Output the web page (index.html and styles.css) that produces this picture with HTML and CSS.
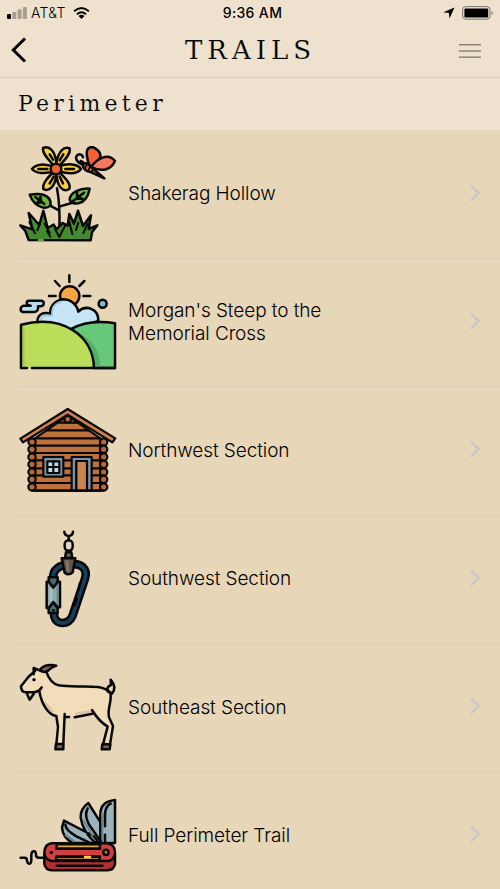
FILE: index.html
```html
<!DOCTYPE html>
<html lang="en">
<head>
<meta charset="utf-8">
<title>Trails</title>
<link rel="stylesheet" href="styles.css">
</head>
<body>
<header class="top">
  <div class="status">
    <div class="status-left">
      <svg class="signal" viewBox="0 0 20 13"><rect x="0" y="8" width="4" height="5" rx="1"/><g opacity=".3"><rect x="5.3" y="6" width="4" height="7" rx="1"/><rect x="10.6" y="3.3" width="4" height="9.7" rx="1"/><rect x="15.9" y="1" width="4" height="12" rx="1"/></g></svg>
      <span class="carrier">AT&amp;T</span>
      <svg class="wifi" viewBox="0 0 18 13"><g fill="none" stroke="#000" stroke-width="2.1"><path d="M1 4.7Q9-2.5 17 4.7M4 8Q9 3.6 14 8"/></g><path d="M5.8 9.7Q9 7 12.2 9.7L9 12.9Z"/></svg>
    </div>
    <div class="clock">9:36 AM</div>
    <div class="status-right">
      <svg class="locate" viewBox="0 0 12 12"><path d="M11.5.4L6.5 11.5L5.9 6L.4 5.3Z"/></svg>
      <svg class="battery" viewBox="0 0 32 14"><rect x=".6" y=".6" width="27.4" height="12.6" rx="3.2" fill="none" stroke="#777167" stroke-width="1"/><rect x="2.4" y="2.4" width="23.8" height="9" rx="1"/><path d="M29.6 4.7Q32.5 7 29.6 9.3Z" fill="#8c857a"/></svg>
    </div>
  </div>
  <nav class="bar">
    <svg class="back" viewBox="0 0 16 26"><path d="M14 1.5L2.3 13L14 24.5"/></svg>
    <h1>TRAILS</h1>
    <svg class="menu" viewBox="0 0 22 14"><path d="M0 .8H22M0 7H22M0 13.1H22"/></svg>
  </nav>
</header>
<h2>Perimeter</h2>
<ul class="list">
  <li class="row">
    <svg class="pic" viewBox="0 0 348 336">
      <path class="stem" d="M141 151Q151 205 148 275M148 218L119 202M150 205L185 195"/>
      <path fill="#69b83d" d="M59 170C88 165 123 168 122 200C115 216 76 214 59 170ZM239 152C211 150 180 163 179 185C184 203 229 206 239 152Z"/>
      <path d="M76 177L103 198M91 176L94 193L77 196M222 164L190 188M201 165V182L218 182"/>
      <g fill="#f8cf42"><path d="M139 92C121 69 96 49 99 30C119 21 137 41 139 77C144 41 162 23 179 31C183 49 161 70 145 86C174 75 202 77 213 93C202 108 174 108 145 99C164 119 184 136 178 153C159 165 142 145 139 110C136 145 117 163 100 153C96 136 115 117 133 99C107 108 79 108 66 93C77 77 105 76 135 88"/></g>
      <path d="M119 49L129 65M160 49L149 67M85 93H112M166 93H192M119 136L131 116M159 136L149 116"/>
      <circle cx="138" cy="93" r="16" fill="#f2602d"/>
      <path fill="#f46239" d="M237 80C226 45 227 24 250 28C269 37 276 51 268 65L242 86Z"/>
      <path fill="#fa785e" d="M244 87C260 62 294 43 315 69C304 94 278 104 244 87Z"/>
      <path fill="none" d="M222 78C220 72 217 70 212 69M221 80C200 76 189 54 208 49Q218 50 219 58"/>
      <path fill="#b87831" d="M218 82C223 70 235 78 244 87L283 121L244 103Q221 99 218 82Z"/><path d="M230 80L224 93M240 86L235 98M249 94L245 102" stroke-width="5"/>
      <path fill="#438b2e" d="M56 306L46 279L31 262L67 274L56 225L88 261L100 218L113 270L131 260L139 274L158 255L173 263L178 228L192 257L204 218L219 264L243 232L236 273L262 262L246 283L242 307Z"/>
      <path fill="none" stroke-width="6" d="M58 252L75 286M91 254L82 277M104 257L119 285M135 273L148 297L165 263M178 252L187 288M205 254L198 276M233 257L220 285M111 280L121 296"/>
      <path stroke="#69a84b" d="M87 307H98"/>
    </svg><span>Shakerag Hollow</span><svg class="chevron" viewBox="0 0 10 18"><path d="M1 1.5L8.6 9L1 16.5"/></svg>
  </li>
  <li class="row">
    <svg class="pic" viewBox="0 0 348 336">
      <path d="M178 28V48M135 45L149 60M223 45L208 60M117 90H137M220 90H241"/>
      <circle cx="179" cy="90" r="29" fill="#faa544"/>
      <path fill="#c7e5f4" d="M82 169C82 145 99 137 121 143C119 118 139 103 158 100C185 100 201 117 205 137C227 115 266 127 265 165L181 191Z"/>
      <path fill="none" stroke="#9bc9dc" stroke-width="5" d="M92 163Q92 148 118 149L127 149Q122 115 153 107"/>
      <path fill="#b6dced" d="M55 104H94Q102 105 101 114Q99 122 89 121H84Q86 137 73 138H38Q31 136 32 128Q34 120 41 119H62L52 116Q47 106 55 104Z"/>
      <circle cx="278" cy="113" r="12" fill="#80b7d2"/>
      <path fill="#66c878" d="M181 190Q237 159 315 172V306H252Z"/>
      <path fill="#53ae67" stroke="none" d="M187 191Q274 228 270 303H251Q246 237 187 191Z"/>
      <path fill="#bcdd59" stroke="none" d="M33 306V176C161 143 250 211 252 306Z"/>
      <path fill="none" d="M51 306H33V176C161 143 250 211 252 306M66 306H315"/>
      <path fill="none" stroke="#a1c451" stroke-width="5" d="M41 299V182"/>
    </svg><span>Morgan's Steep to the<br>Memorial Cross</span><svg class="chevron" viewBox="0 0 10 18"><path d="M1 1.5L8.6 9L1 16.5"/></svg>
  </li>
  <li class="row">
    <svg class="pic cabin" viewBox="0 -4 348 336">
      <path fill="#bd713b" d="M75 129L173 61L271 129V286H75Z"/>
      <path fill="none" d="M137 82H210M111 105H235M76 129H270M76 151H270M76 173H270M76 195H270M76 219H270M76 240H270M76 263H270"/>
      <circle cx="173" cy="72" r="10" fill="#b66938"/>
      <g fill="#b4673a"><circle cx="66" cy="140" r="11"/><circle cx="66" cy="162" r="11"/><circle cx="66" cy="185" r="11"/><circle cx="66" cy="207" r="11"/><circle cx="66" cy="230" r="11"/><circle cx="66" cy="252" r="11"/><circle cx="66" cy="275" r="11"/><circle cx="281" cy="140" r="11"/><circle cx="281" cy="162" r="11"/><circle cx="281" cy="185" r="11"/><circle cx="281" cy="207" r="11"/><circle cx="281" cy="230" r="11"/><circle cx="281" cy="252" r="11"/><circle cx="281" cy="275" r="11"/></g>
      <path fill="#ce7f4b" d="M173 41L316 129L307 141L173 58L39 141L31 130Z"/>
      <path fill="#7d91a7" d="M100 185H160V244H100ZM185 185H245V286H231V198H199V286H185Z"/>
      <path fill="#c8854e" d="M199 197H231V286H199Z"/><path fill="#b8dce3" d="M112 198H148V233H112Z"/><path d="M130 198V233M112 215H148M66 286H281"/>
    </svg><span>Northwest Section</span><svg class="chevron" viewBox="0 0 10 18"><path d="M1 1.5L8.6 9L1 16.5"/></svg>
  </li>
  <li class="row">
    <svg class="pic" viewBox="0 2 348 336">
      <path fill="none" d="M163 28C164 45 188 45 189 28M176 42V54"/><rect x="164" y="54" width="24" height="31" rx="12" fill="none"/><path fill="#686663" d="M168 90H184L187 107H165Z"/>
      <path fill="none" stroke-width="26" d="M130 169C126 140 151 128 177 127C213 120 234 139 225 169L187 282C175 309 139 308 133 283L129 257"/>
      <path fill="none" stroke="#163f5d" stroke-width="11" d="M130 169C126 140 151 128 177 127C213 120 234 139 225 169L187 282C175 309 139 308 133 283L129 257"/>
      <path d="M206 202L210 183M193 250L201 229"/>
      <path fill="#62564f" d="M155 108H196L188 150Q176 161 164 151Z"/><path stroke="#84776d" d="M171 116L174 145"/>
      <path fill="#426b74" d="M116 165H143V183L130 194L116 183ZM116 258L130 240L143 258V272H116Z"/>
      <path fill="#8fabaf" d="M110 178H116L130 196L144 178H150V255H143L130 239L116 257H110Z"/><path stroke="#a9c4c7" d="M123 200V233"/><path stroke="#65868c" stroke-width="6" d="M143 190V244"/><path d="M130 264H131"/>
    </svg><span>Southwest Section</span><svg class="chevron" viewBox="0 0 10 18"><path d="M1 1.5L8.6 9L1 16.5"/></svg>
  </li>
  <li class="row">
    <svg class="pic" viewBox="0 -12 348 336">
      <path fill="#f1ddba" stroke="none" d="M71 48L102 47Q117 79 137 89L273 97L303 118L294 159L309 211L299 272H279L292 215Q266 197 246 166L164 187L159 270H139L141 185Q104 164 88 110L44 112L33 96Z"/>
      <path stroke="#dac19c" stroke-width="7" d="M94 106L84 114M199 176L239 169M106 145L127 169" fill="none"/>
      <path fill="#786060" d="M89 45Q105 25 139 32Q123 37 111 50Q99 54 89 45Z"/><path fill="#796461" d="M138 267H160V283H136ZM277 268H301L299 283H275Z"/>
      <path fill="#eed1ac" d="M302 74Q322 98 306 116L293 109Q289 95 303 90Z"/>
      <path fill="none" d="M71 58V39L91 47M75 48L55 66L33 94Q33 112 48 112L74 111Q88 109 95 97M49 112L59 134L73 114M108 49Q122 86 146 91C204 101 274 82 301 113C307 141 291 158 297 187L309 213L300 268M88 108C95 151 117 180 139 183L144 216L139 268M164 177L160 267M166 186H177M194 187L247 176M246 165Q266 198 293 215L279 268"/><circle cx="72" cy="74" r="5" stroke="none"/>
    </svg><span>Southeast Section</span><svg class="chevron" viewBox="0 0 10 18"><path d="M1 1.5L8.6 9L1 16.5"/></svg>
  </li>
  <li class="row">
    <svg class="pic" viewBox="0 -32 348 336">
      <path fill="none" d="M32 204H44Q51 204 51 213Q52 222 58 222Q64 222 64 209V195Q65 185 72 185Q78 185 78 196Q78 204 87 204H103"/>
      <path fill="#9db3bc" d="M162 93L156 113Q157 142 188 160H267L251 139ZM235 40Q210 58 212 84Q218 125 254 158H272V99ZM315 31Q270 36 271 75V160H315Z"/>
      <path stroke="#698891" stroke-width="6" fill="none" d="M167 137L195 156M220 92L248 137M277 71V150"/>
      <path fill="none" d="M166 105Q167 122 199 140L237 158M233 56Q222 76 237 104L267 148M302 42Q285 50 285 76V110M285 135V155"/>
      <path fill="#b42d31" d="M103 194H315V223Q312 241 292 242H125Q107 241 103 223Z"/><path fill="#e3a93b" d="M137 164H270V211H137Z"/>
      <path fill="#d23f40" d="M125 161H140V177H270V161H290Q315 164 315 188Q314 211 295 214H269V201H139V214H124Q103 209 103 187Q105 163 125 161Z"/>
      <path d="M140 161H270M140 177H270M140 201H270M140 214H270M140 228H277"/><path stroke="#ffce4d" d="M225 202H240"/>
      <circle cx="124" cy="188" r="5" stroke="none"/><circle cx="288" cy="188" r="8" fill="#bd8a32"/>
    </svg><span>Full Perimeter Trail</span><svg class="chevron" viewBox="0 0 10 18"><path d="M1 1.5L8.6 9L1 16.5"/></svg>
  </li>
</ul>
</body>
</html>
```

FILE: styles.css
```css
* { box-sizing: border-box; }
body { margin: 0; width: 500px; height: 889px; overflow: hidden; background: #e7d6b8; color: #000; font-family: Inter, "Liberation Sans", sans-serif; }
svg { display: block; flex: none; }
.top { height: 78px; background: #eee2cf; border-bottom: 1px solid #d8cec1; }
.status { height: 25px; display: grid; grid-template-columns: 1fr auto 1fr; align-items: center; padding: 0 6px 0 11px; }
.status-left, .status-right { display: flex; align-items: center; }
.status-left { margin-left: -4px; }
.status-right { justify-content: flex-end; gap: 7px; }
.signal { width: 20px; height: 13px; margin-right: 4px; }
.carrier { font-size: 14px; font-weight: 300; letter-spacing: .3px; line-height: 24px; margin-right: 7px; }
.wifi { width: 17px; height: 12px; }
.clock { font-size: 14px; font-weight: 500; letter-spacing: .35px; line-height: 24px; }
.locate { width: 12px; height: 12px; }
.battery { width: 32px; height: 14px; }
.bar { height: 50px; display: flex; align-items: center; justify-content: space-between; padding: 0 19px 0 11px; }
.back { width: 16px; height: 26px; }
.back path { fill: none; stroke: #000; stroke-width: 3; stroke-linecap: butt; }
.menu { width: 22px; height: 14px; margin-top: 2px; }
.menu path { stroke: #5a554e; stroke-width: 1; }
h1, h2 { margin: 0; font-family: "DejaVu Serif", serif; font-weight: 400; -webkit-text-stroke: .15px #eee2cf; }
h1 { padding-left: 15px; font-size: 26px; line-height: 50px; letter-spacing: 5px; }
h2 { height: 51.67px; padding-left: 18px; background: #eee2cf; font-size: 22px; line-height: 51px; letter-spacing: 4.25px; }
.list { margin: 0; padding: 0; list-style: none; }
.row { height: 128.33px; display: flex; align-items: center; padding: 0 20px 0 10px; font-size: 19px; font-weight: 300; letter-spacing: -.08px; line-height: 23px; }
.row + .row { background: linear-gradient(#dacdb8, #dacdb8) 18px 0 / 100% 1px no-repeat; }
.row span { flex: 1; padding-left: 2px; }
.pic { width: 116px; height: 112px; stroke: #080808; stroke-width: 7.5; stroke-linecap: round; stroke-linejoin: round; }
.cabin { stroke-width: 6.5; }
.pic .stem { fill: none; }
.chevron { width: 10px; height: 18px; margin-top: -2px; }
.chevron path { fill: none; stroke: #c9c5c8; stroke-width: 2.2; }
```
